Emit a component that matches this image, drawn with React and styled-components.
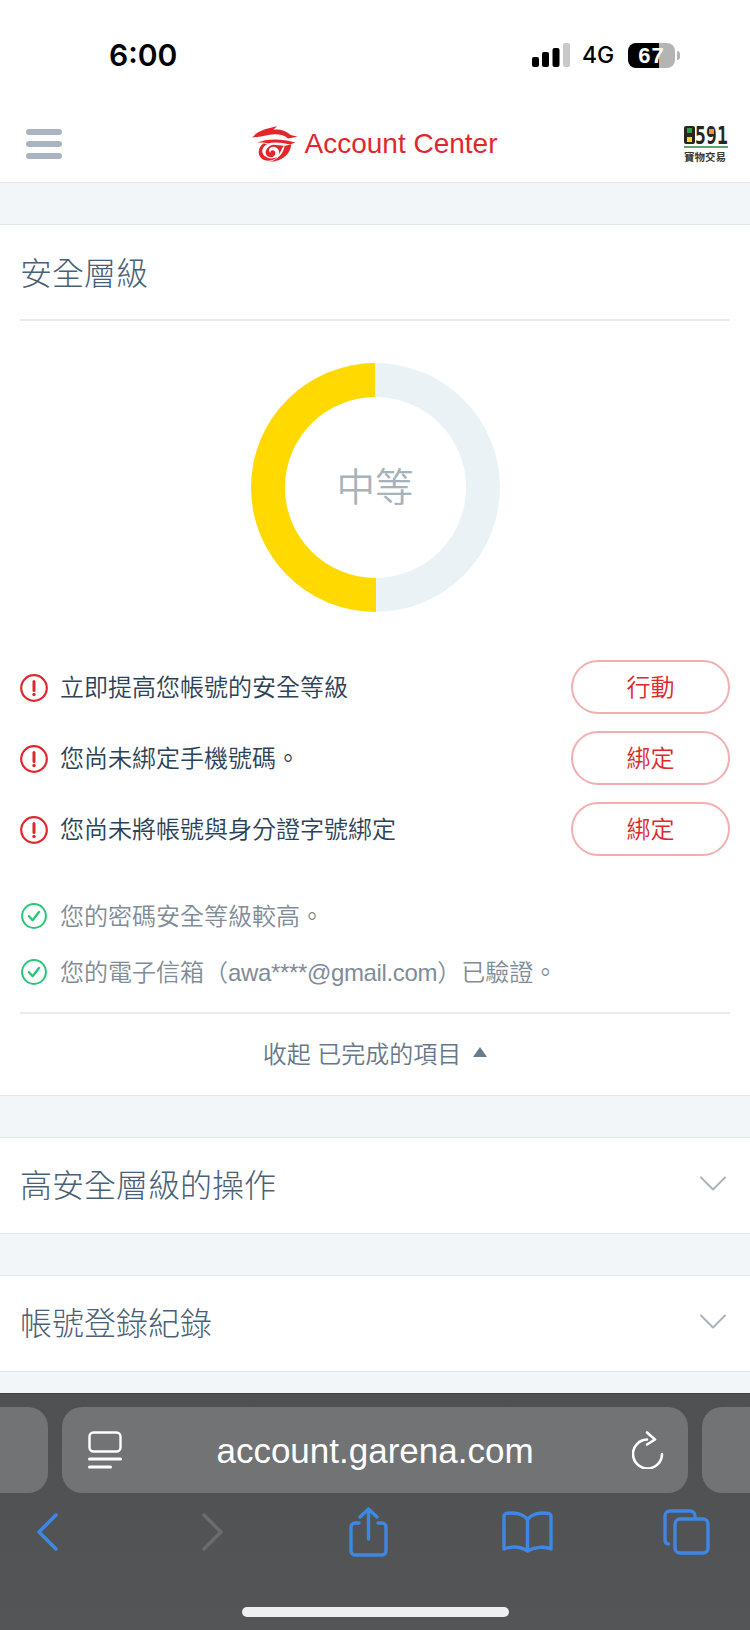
import React from "react";
import styled, { createGlobalStyle } from "styled-components";

const Global = createGlobalStyle`
  html, body { margin: 0; padding: 0; background: #f3f6f9; }
  * { box-sizing: border-box; }
`;
const CJK = `"Liberation Sans", "Noto Sans CJK TC", sans-serif`;

const Page = styled.div`
  width: 750px; height: 1630px; display: flex; flex-direction: column; overflow: hidden;
  background: #f3f6f9; font-family: ${CJK}; font-weight: 350;
`;
const Top = styled.header`
  height: 183px; background: #fff; border-bottom: 1px solid #e2e7ec; flex: none;
`;
const StatusBar = styled.div`
  height: 100px; display: flex; align-items: center; padding: 10px 0 0 109px;
`;
const Clock = styled.div`
  font: 600 30px/1 Inter, sans-serif; color: #000; width: 423px;
`;
const NetLabel = styled.div`
  font: 500 23px/1 Inter, sans-serif; color: #000; margin: 0 13px 0 12px; width: 33px; white-space: nowrap;
`;
const Battery = styled.div`
  position: relative; width: 47px; height: 25px; border-radius: 8px;
  background: linear-gradient(to right, #000 0 66%, #b4b4b4 66% 100%);
  color: #fff; font: 700 22px/25px "Liberation Sans", sans-serif; text-align: center;
  letter-spacing: 1px;
  &::after { content: ""; position: absolute; left: 49px; top: 8px; width: 3px; height: 9px;
    border-radius: 0 3px 3px 0; background: #b4b4b4; }
`;
const NavBar = styled.div`
  height: 82px; display: flex; align-items: center; padding: 5px 22px 0 26px;
`;
const Brand = styled.div`
  flex: 1; display: flex; align-items: center; justify-content: center; gap: 7px; padding-left: 3px;
`;
const BrandText = styled.div`
  font: 400 28px/1 "Liberation Sans", sans-serif; color: #e0282c;
`;
const Shop = styled.div`
  width: 44px; display: flex; flex-direction: column; align-items: stretch;
`;
const ShopDigits = styled.div`
  display: flex; height: 22px; border-bottom: 2px solid #5da56b; align-items: flex-start;
`;
const ShopDigit = styled.span`
  position: relative; width: 11px; height: 18px; flex: none; display: block;
  font: 700 18px/13px "DejaVu Sans Mono", monospace; color: #26261e; text-align: center;
  background: ${p => p.$block ? "#26261e" : "transparent"};
  border-radius: 2px;
  & > b { display: block; font-weight: 700; transform: scaleY(1.4); transform-origin: top; }
`;
const ShopLight = styled.i`
  position: absolute; left: ${p => p.$left}px; top: ${p => p.$top}px; width: 5px; height: 5px; background: ${p => p.$color};
`;
const ShopSub = styled.div`
  font: 700 10.500px/10px "Noto Sans CJK TC", serif; color: #3a3a32; white-space: nowrap; margin-top: 4px;
`;
const Band = styled.div` height: 41px; flex: none; `;
const Card = styled.section`
  background: #fff; border-top: 1px solid #e2e7ec; border-bottom: 1px solid #e2e7ec; flex: none;
`;
const SecurityCard = styled(Card)` height: 872px; padding: 0 20px; `;
const Title = styled.h2`
  margin: 0; height: 96px; display: flex; align-items: center; padding-bottom: 3px;
  font-size: 32px; font-weight: 300; color: #4a6076; border-bottom: 2px solid #e9edf1;
`;
const Ring = styled.div`
  width: 249px; height: 249px; border-radius: 50%; margin: 42px auto 48px;
  background: conic-gradient(#ebf2f6 0 50%, #ffd900 50% 100%);
  display: flex; align-items: center; justify-content: center;
`;
const RingHole = styled.div`
  width: 181px; height: 181px; border-radius: 50%; background: #fff;
  display: flex; align-items: center; justify-content: center; padding-bottom: 8px;
  font-size: 38.500px; font-weight: 350; color: #a8b2bb;
`;
const Issues = styled.div` display: flex; flex-direction: column; gap: 17px; `;
const IssueRow = styled.div` display: flex; align-items: center; height: 54px; gap: 12px; `;
const IssueText = styled.div`
  flex: 1; font-size: 24px; color: #2b4257; padding-bottom: 4px;
`;
const AlertSvg = styled.svg` flex: none; margin-top: 2px; `;
const OkSvg = styled.svg` flex: none; `;
const ChevronSvg = styled.svg` flex: none; margin-top: 1px; fill: none; stroke: #aab4be; stroke-width: 2; `;
const ActionButton = styled.button`
  width: 159px; height: 54px; border-radius: 27px; background: #fff; border: 2px solid #f3aeb0;
  color: #e0282c; font: 350 24px ${CJK}; padding: 0 0 4px;
`;
const DoneList = styled.div` margin-top: 32px; display: flex; flex-direction: column; `;
const DoneRow = styled.div`
  display: flex; align-items: center; height: 56px; gap: 13px; padding-left: 1px;
  font-size: 24px; color: #808c97;
`;
const DoneText = styled.span` padding-bottom: 4px; `;
const Latin = styled.span` letter-spacing: -.35px; `;
const Collapse = styled.div`
  margin-top: 12px; height: 83px; border-top: 2px solid #e9edf1; display: flex; align-items: center;
  justify-content: center; gap: 12px; font-size: 24px; color: #66798a; padding-bottom: 5px;
`;
const Tri = styled.span`
  width: 0; height: 0; border-left: 7px solid transparent; border-right: 7px solid transparent;
  border-bottom: 10px solid #6a7d8e;
`;
const Gap = styled.div` height: 41px; flex: none; `;
const FoldCard = styled(Card)`
  height: 97px; display: flex; align-items: center; justify-content: space-between;
  padding: 0 24px 5px 20px; font-size: 32px; font-weight: 300; color: #4a6076;
`;
const Browser = styled.footer`
  margin-top: auto; height: 237px; flex: none; background: linear-gradient(#4f5052, #545557);
  border-top: 1px solid #3e3f41; position: relative; padding-top: 13px;
`;
const TabStrip = styled.div` display: flex; gap: 14px; margin-left: -30px; `;
const SideTab = styled.div`
  width: 78px; height: 86px; border-radius: 20px; background: #727375; flex: none;
`;
const UrlBar = styled.div`
  width: 626px; height: 86px; flex: none; border-radius: 20px; background: #727375; display: flex;
  align-items: center; justify-content: space-between; padding: 0 24px 0 26px; color: #fff;
`;
const UrlText = styled.div`
  font: 400 35px/1 "Liberation Sans", sans-serif; color: #fff; margin-right: 4px;
`;
const Tools = styled.div`
  display: flex; align-items: center; height: 78px; padding-left: 37px;
`;
const Tool = styled.svg`
  flex: none; margin-left: ${p => p.$gap || 0}px; fill: none; stroke: ${p => p.$off ? "#6b6c6e" : "#3f87e5"};
  stroke-width: 3.4; stroke-linecap: round; stroke-linejoin: round;
`;
const HomeBar = styled.div`
  position: absolute; left: 242px; bottom: 13px; width: 267px; height: 10px; border-radius: 5px; background: #efefef;
`;

const AlertIcon = () => (
  <AlertSvg width="28" height="28" viewBox="0 0 28 28">
    <circle cx="14" cy="14" r="12.800" fill="none" stroke="#e0282c" strokeWidth="2.200" />
    <path d="M14 7.500v9" stroke="#e0282c" strokeWidth="3" strokeLinecap="round" />
    <circle cx="14" cy="20.500" r="1.700" fill="#e0282c" />
  </AlertSvg>
);
const OkIcon = () => (
  <OkSvg width="26" height="26" viewBox="0 0 26 26">
    <circle cx="13" cy="13" r="11.900" fill="none" stroke="#2bc67a" strokeWidth="2" />
    <path d="M8 13.200l3.600 4L18 9" fill="none" stroke="#2bc67a" strokeWidth="2.400" strokeLinecap="round" strokeLinejoin="round" />
  </OkSvg>
);
const Chevron = () => (
  <ChevronSvg width="26" height="15" viewBox="0 0 26 15">
    <path d="M1 1.500l12 12 12-12" strokeLinecap="round" strokeLinejoin="round" />
  </ChevronSvg>
);
const Burger = () => (
  <svg width="36" height="30" viewBox="0 0 36 30" fill="#a9b4c0">
    <rect y="0" width="36" height="6" rx="3" /><rect y="12" width="36" height="6" rx="3" /><rect y="24" width="36" height="6" rx="3" />
  </svg>
);
const Signal = () => (
  <svg width="38" height="24" viewBox="0 0 38 24">
    <rect x="0" y="14" width="7" height="10" rx="2" fill="#000" /><rect x="10" y="9" width="7" height="15" rx="2" fill="#000" />
    <rect x="20.500" y="5" width="7" height="19" rx="2" fill="#000" /><rect x="31" y="0" width="7" height="24" rx="2" fill="#c8c8c8" />
  </svg>
);
const DragonLogo = () => (
  <svg width="46" height="36" viewBox="0 0 135 107" fill="#e4262b">
    <path d="M0 34 C14 16 40 8 74 1 L62 11 C82 8 102 14 114 27 L135 32 L106 37 C94 26 72 22 48 27 C30 31 14 33 0 34Z" />
    <path d="M14 50 C40 38 84 36 128 49 L112 55 C88 49 66 47 46 52 C38 49 26 49 14 50Z" />
    <path d="M34 51 C18 62 14 82 26 95 C38 108 62 104 74 93 C58 100 40 96 32 84 C26 72 32 60 44 54Z" />
    <path d="M116 54 C114 78 96 104 52 107 C76 98 94 82 96 59 L62 56 C52 58 42 66 40 76 C38 88 50 96 60 92 C70 88 72 74 62 72 C56 71 52 76 54 80 C46 74 50 62 62 62 C76 62 84 76 78 88 L92 60 Z" />
  </svg>
);

export default function App() {
  return (
    <Page>
      <Global />
      <Top>
        <StatusBar>
          <Clock>6:00</Clock>
          <Signal />
          <NetLabel>4G</NetLabel>
          <Battery>67</Battery>
        </StatusBar>
        <NavBar>
          <Burger />
          <Brand><DragonLogo /><BrandText>Account Center</BrandText></Brand>
          <Shop>
            <ShopDigits>
              <ShopDigit $block><b>8</b><ShopLight $left={3} $top={2} $color="#2f9a49" /><ShopLight $left={3} $top={11} $color="#f4d92a" /></ShopDigit>
              <ShopDigit><b>5</b></ShopDigit>
              <ShopDigit><b>9</b><ShopLight $left={3} $top={3} $color="#e9963f" /></ShopDigit>
              <ShopDigit><b>1</b></ShopDigit>
            </ShopDigits>
            <ShopSub>寶物交易</ShopSub>
          </Shop>
        </NavBar>
      </Top>
      <Band />
      <SecurityCard>
        <Title>安全層級</Title>
        <Ring><RingHole>中等</RingHole></Ring>
        <Issues>
          <IssueRow><AlertIcon /><IssueText>立即提高您帳號的安全等級</IssueText><ActionButton>行動</ActionButton></IssueRow>
          <IssueRow><AlertIcon /><IssueText>您尚未綁定手機號碼。</IssueText><ActionButton>綁定</ActionButton></IssueRow>
          <IssueRow><AlertIcon /><IssueText>您尚未將帳號與身分證字號綁定</IssueText><ActionButton>綁定</ActionButton></IssueRow>
        </Issues>
        <DoneList>
          <DoneRow><OkIcon /><DoneText>您的密碼安全等級較高。</DoneText></DoneRow>
          <DoneRow><OkIcon /><DoneText>您的電子信箱（<Latin>awa****@gmail.com</Latin>）已驗證。</DoneText></DoneRow>
        </DoneList>
        <Collapse>收起 已完成的項目<Tri /></Collapse>
      </SecurityCard>
      <Gap />
      <FoldCard>高安全層級的操作<Chevron /></FoldCard>
      <Gap />
      <FoldCard>帳號登錄紀錄<Chevron /></FoldCard>
      <Browser>
        <TabStrip>
          <SideTab />
          <UrlBar>
            <svg width="34" height="38" viewBox="0 0 34 38" fill="none" stroke="#fff" strokeWidth="2.400" strokeLinecap="round">
              <rect x="1.500" y="1.500" width="31" height="19" rx="4" />
              <path d="M1.500 28h31M1.500 36h21" strokeWidth="3" />
            </svg>
            <UrlText>account.garena.com</UrlText>
            <svg width="32" height="38" viewBox="0 0 32 38" fill="none" stroke="#fff" strokeWidth="2.600" strokeLinecap="round" strokeLinejoin="round">
              <path d="M15 8.500A14.500 14.500 0 1 0 30 23" />
              <path d="M15 1.500l8 7-8 5" />
            </svg>
          </UrlBar>
          <SideTab />
        </TabStrip>
        <Tools>
          <Tool width="21" height="38" viewBox="0 0 21 38"><path d="M19 2L2 19l17 17" /></Tool>
          <Tool $off $gap={144} width="21" height="38" viewBox="0 0 21 38"><path d="M2 2l17 17L2 36" /></Tool>
          <Tool $gap={126} width="39" height="50" viewBox="0 0 39 50">
            <path d="M10 16H6a4 4 0 0 0-4 4v24a4 4 0 0 0 4 4h27a4 4 0 0 0 4-4V20a4 4 0 0 0-4-4h-4" />
            <path d="M19.500 32V2M11 10l8.500-8L28 10" />
          </Tool>
          <Tool $gap={114} width="51" height="42" viewBox="0 0 51 42">
            <path d="M25.500 38V9C22 3 13 1 4 2.500 2.500 3 2 4 2 5.500V38c8-3 17-2 23.500 2C32 36 43 35 49 38V5.500c0-1.500-.5-2.500-2-3C38 1 29 3 25.500 9" />
          </Tool>
          <Tool $gap={110} width="47" height="46" viewBox="0 0 47 46">
            <path d="M5.500 35C3 35 2 33.500 2 31V7c0-3 2-5 5-5h20c3 0 5 2 5 5v2" />
            <rect x="12" y="10" width="33" height="34" rx="5" />
          </Tool>
        </Tools>
        <HomeBar />
      </Browser>
    </Page>
  );
}
